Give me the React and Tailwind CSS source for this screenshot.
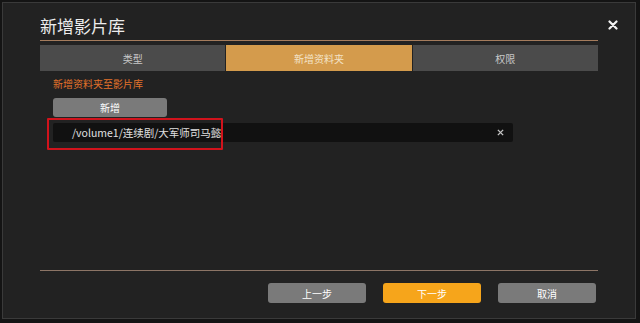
import React from 'react';

const font = { fontFamily: '"Noto Sans CJK SC", "Noto Sans", sans-serif' };

// Tab strip item
const Tab = ({ label, active }) => (
  <div
    className={`flex-1 flex items-center justify-center text-[10px] ${
      active ? 'bg-[#d49b4c] text-[#f3e3c8]' : 'bg-[#4b4b4b] text-[#c8c8c8]'
    }`}
  >
    {label}
  </div>
);

const FooterButton = ({ label, primary }) => (
  <button
    className={`w-[98px] h-[20px] rounded-[3px] text-[10px] text-white ${
      primary ? 'bg-[#f6a51b]' : 'bg-[#7a7a7a]'
    }`}
  >
    {label}
  </button>
);

export default function App() {
  return (
    <div className="w-[640px] h-[323px] bg-[#141414] pt-[2px] pl-[2px] overflow-hidden" style={font}>
      <div className="relative w-[634px] h-[317px] bg-[#222222] border border-[#3a3a3a] flex flex-col pl-[37px] pr-[37px]">
        {/* header */}
        <div className="h-[37px] flex items-end pb-[6px]">
          <span className="text-[17px] leading-none text-[#ececec]">新增影片库</span>
        </div>
        <svg className="absolute right-[17px] top-[17px]" width="10" height="10" viewBox="0 0 10 10">
          <path d="M1.5 1.5 L8.5 8.5 M8.5 1.5 L1.5 8.5" stroke="#f2f2f2" strokeWidth="2.2" strokeLinecap="round" />
        </svg>
        <div className="h-px bg-[#a57c5d]" />

        {/* tabs */}
        <div className="mt-[4px] h-[26px] flex gap-px">
          <Tab label="类型" />
          <Tab label="新增资料夹" active />
          <Tab label="权限" />
        </div>

        {/* content */}
        <div className="flex-1 pl-[13px] pt-[6px]">
          <div className="text-[10px] leading-[14px] text-[#e2722a]">新增资料夹至影片库</div>
          <button className="mt-[7px] w-[114px] h-[19px] rounded-[3px] bg-[#7a7a7a] text-[10px] text-white flex items-center justify-center">
            新增
          </button>
          <div className="relative mt-[6px] w-[460px] h-[19px] bg-[#111111] rounded-[2px] flex items-center pl-[19px] pr-[9px]">
            <span className="flex-1 text-[10.5px] text-[#e0e0e0]">/volume1/连续剧/大军师司马懿</span>
            <svg width="7" height="7" viewBox="0 0 8 8">
              <path d="M1 1 L7 7 M7 1 L1 7" stroke="#c4c4c4" strokeWidth="1.6" />
            </svg>
            <div className="absolute left-[-6px] top-[-5px] w-[176px] h-[32px] border-2 border-[#d1131c] rounded-[1px]" />
          </div>
        </div>

        {/* footer */}
        <div className="h-px bg-[#8d7566]" />
        <div className="h-[47px] flex justify-end gap-[17px] pt-[12px] pr-[2px]">
          <FooterButton label="上一步" />
          <FooterButton label="下一步" primary />
          <FooterButton label="取消" />
        </div>
      </div>
    </div>
  );
}
